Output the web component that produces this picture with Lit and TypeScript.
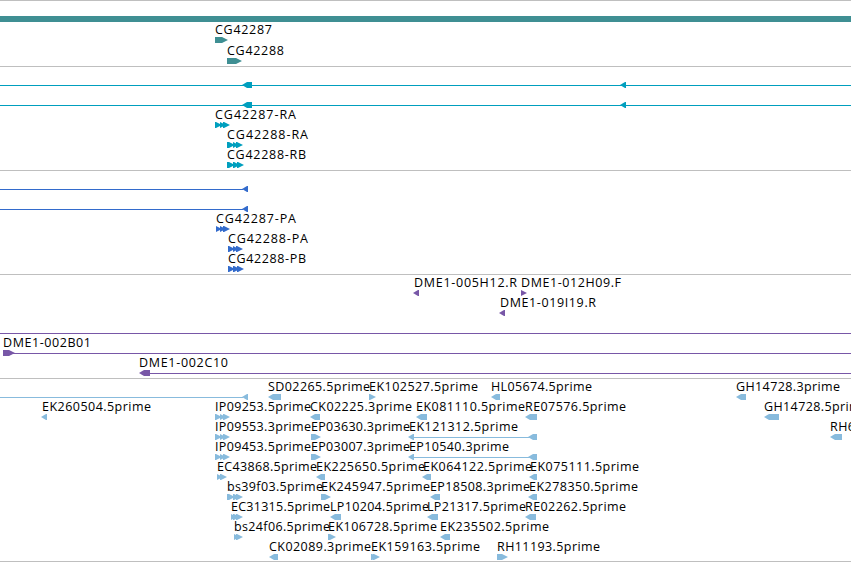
import { LitElement, html, css, svg } from "lit";
import { customElement, property } from "lit/decorators.js";

type Dir = "l" | "r";
// start, end, direction
type Exon = [number, number, Dir];
// text, start, end
type Label = [string, number, number];

interface Row {
  y: number;
  lines?: [number, number][];
  exons?: Exon[];
  labels?: Label[];
}

interface Track {
  name: string;
  color: string;
  height: number;
  bar?: number;
  rows: Row[];
}

// y is the top of the exon boxes, counted from the separator above the track
const TRACKS: Track[] = [
  {
    name: "genes",
    color: "#3f8f93",
    height: 66,
    bar: 16,
    rows: [
      { y: 37, exons: [[215, 228, "r"]], labels: [["CG42287", 215, 272]] },
      { y: 58, exons: [[227, 242, "r"]], labels: [["CG42288", 227, 284]] },
    ],
  },
  {
    name: "transcripts",
    color: "#009fbe",
    height: 104,
    rows: [
      { y: 16, lines: [[0, 851]], exons: [[242, 252, "l"], [620, 626, "l"]] },
      { y: 36, lines: [[0, 851]], exons: [[242, 252, "l"], [620, 626, "l"]] },
      { y: 56, exons: [[215, 222, "r"], [220, 226, "r"], [223, 230, "r"]], labels: [["CG42287-RA", 215, 296]] },
      { y: 76, exons: [[227, 235, "r"], [233, 239, "r"], [236, 243, "r"]], labels: [["CG42288-RA", 227, 308]] },
      { y: 96, exons: [[227, 235, "r"], [233, 240, "r"], [237, 244, "r"]], labels: [["CG42288-RB", 227, 306]] },
    ],
  },
  {
    name: "polypeptides",
    color: "#336bcc",
    height: 104,
    rows: [
      { y: 16, lines: [[0, 243]], exons: [[242, 248, "l"]] },
      { y: 36, lines: [[0, 243]], exons: [[242, 248, "l"]] },
      { y: 56, exons: [[216, 222, "r"], [220, 226, "r"], [223, 230, "r"]], labels: [["CG42287-PA", 216, 296]] },
      { y: 76, exons: [[228, 235, "r"], [233, 239, "r"], [236, 243, "r"]], labels: [["CG42288-PA", 228, 308]] },
      { y: 96, exons: [[228, 235, "r"], [233, 240, "r"], [237, 244, "r"]], labels: [["CG42288-PB", 228, 306]] },
    ],
  },
  {
    name: "clones",
    color: "#7857a7",
    height: 104,
    rows: [
      {
        y: 16,
        exons: [[413, 419, "l"], [521, 527, "r"]],
        labels: [["DME1-005H12.R", 414, 517], ["DME1-012H09.F", 521, 621]],
      },
      { y: 36, exons: [[499, 505, "l"]], labels: [["DME1-019I19.R", 500, 596]] },
      { y: 56, lines: [[0, 851]] },
      { y: 76, lines: [[13, 851]], exons: [[3, 15, "r"]], labels: [["DME1-002B01", 3, 91]] },
      { y: 96, lines: [[149, 851]], exons: [[139, 150, "l"]], labels: [["DME1-002C10", 139, 228]] },
    ],
  },
  {
    name: "ests",
    color: "#88bbdd",
    height: 183,
    rows: [
      {
        y: 16,
        lines: [[0, 243]],
        exons: [[242, 248, "l"], [268, 281, "l"], [369, 376, "r"], [491, 500, "l"], [736, 746, "l"]],
        labels: [["SD02265.5prime", 268, 370], ["EK102527.5prime", 369, 478], ["HL05674.5prime", 491, 592], ["GH14728.3prime", 736, 840]],
      },
      {
        y: 36,
        exons: [[41, 47, "l"], [215, 222, "r"], [220, 226, "r"], [223, 230, "r"], [310, 320, "l"], [416, 427, "l"], [525, 537, "l"], [764, 779, "l"]],
        labels: [["EK260504.5prime", 42, 151], ["IP09253.5prime", 215, 311], ["CK02225.3prime", 310, 412], ["EK081110.5prime", 416, 525], ["RE07576.5prime", 525, 626], ["GH14728.5prime", 764, 868]],
      },
      {
        y: 56,
        lines: [[413, 530]],
        exons: [[215, 222, "r"], [220, 226, "r"], [223, 230, "r"], [311, 321, "r"], [408, 414, "l"], [528, 537, "l"], [830, 842, "l"]],
        labels: [["IP09553.3prime", 215, 311], ["EP03630.3prime", 311, 410], ["EK121312.5prime", 409, 518], ["RH61402.5prime", 830, 933]],
      },
      {
        y: 76,
        lines: [[413, 530]],
        exons: [[215, 222, "r"], [220, 226, "r"], [223, 230, "r"], [311, 321, "r"], [408, 414, "l"], [528, 537, "l"]],
        labels: [["IP09453.5prime", 215, 311], ["EP03007.3prime", 311, 410], ["EP10540.3prime", 409, 509]],
      },
      {
        y: 96,
        exons: [[217, 223, "r"], [220, 227, "r"], [316, 325, "l"], [422, 431, "l"], [529, 537, "l"]],
        labels: [["EC43868.5prime", 217, 317], ["EK225650.5prime", 316, 425], ["EK064122.5prime", 423, 532], ["EK075111.5prime", 530, 639]],
      },
      {
        y: 116,
        exons: [[227, 235, "r"], [233, 240, "r"], [236, 243, "r"], [321, 331, "r"], [430, 440, "l"], [528, 537, "l"]],
        labels: [["bs39f03.5prime", 227, 323], ["EK245947.5prime", 321, 430], ["EP18508.3prime", 430, 530], ["EK278350.5prime", 529, 638]],
      },
      {
        y: 136,
        exons: [[231, 237, "r"], [233, 240, "r"], [236, 243, "r"], [330, 341, "l"], [427, 438, "l"], [525, 536, "l"]],
        labels: [["EC31315.5prime", 231, 330], ["LP10204.5prime", 330, 429], ["LP21317.5prime", 427, 526], ["RE02262.5prime", 525, 626]],
      },
      {
        y: 156,
        exons: [[234, 240, "r"], [236, 243, "r"], [328, 336, "r"], [440, 450, "l"]],
        labels: [["bs24f06.5prime", 234, 330], ["EK106728.5prime", 328, 437], ["EK235502.5prime", 440, 549]],
      },
      {
        y: 176,
        exons: [[269, 278, "l"], [371, 378, "r"], [373, 380, "r"], [497, 508, "r"]],
        labels: [["CK02089.3prime", 269, 371], ["EK159163.5prime", 371, 480], ["RH11193.5prime", 497, 600]],
      },
    ],
  },
];

function exonPoints([x1, x2, dir]: Exon): string {
  const head = Math.min(6, x2 - x1);
  return dir === "r"
    ? `${x1},0 ${x2 - head},0 ${x2},3 ${x2 - head},6 ${x1},6`
    : `${x2},0 ${x1 + head - 1},0 ${x1},3 ${x1 + head - 1},6 ${x2},6`;
}

@customElement("feature-track")
export class FeatureTrack extends LitElement {
  @property({ attribute: false }) declare track: Track;

  static override styles = css`
    :host {
      display: block;
      box-sizing: border-box;
      overflow: hidden;
    }

    svg {
      display: block;
      width: 851px;
    }

    .separator {
      fill: #bfbfbf;
    }

    text {
      font-family: "Open Sans", "Noto Sans", sans-serif;
      font-size: 12.5px;
      fill: #000;
      white-space: pre;
    }
  `;

  private renderRow(row: Row) {
    return svg`
      <g transform="translate(0 ${row.y})">
        ${(row.lines ?? []).map(([a, b]) => svg`<rect x=${a} y="3" width=${b - a} height="1"></rect>`)}
        ${(row.exons ?? []).map((e) => svg`<polygon points=${exonPoints(e)}></polygon>`)}
        ${(row.labels ?? []).map(
          ([text, a, b]) => svg`<text x=${a} y="-3" textLength=${b - a}>${text}</text>`
        )}
      </g>
    `;
  }

  override render() {
    const t = this.track;
    return html`
      <svg height=${t.height} fill=${t.color} aria-label=${t.name}>
        <rect class="separator" width="851" height="1"></rect>
        ${t.bar ? svg`<rect y=${t.bar} width="851" height="6"></rect>` : null}
        ${t.rows.map((row) => this.renderRow(row))}
      </svg>
    `;
  }
}

@customElement("app-root")
export class AppRoot extends LitElement {
  static override styles = css`
    :host {
      display: flex;
      flex-direction: column;
      width: 851px;
      height: 562px;
      overflow: hidden;
      background: #fff;
    }

    .end {
      height: 1px;
      background: #bfbfbf;
    }
  `;

  override render() {
    return html`
      ${TRACKS.map((track) => html`<feature-track .track=${track}></feature-track>`)}
      <div class="end"></div>
    `;
  }
}

declare global {
  interface HTMLElementTagNameMap {
    "app-root": AppRoot;
    "feature-track": FeatureTrack;
  }
}
